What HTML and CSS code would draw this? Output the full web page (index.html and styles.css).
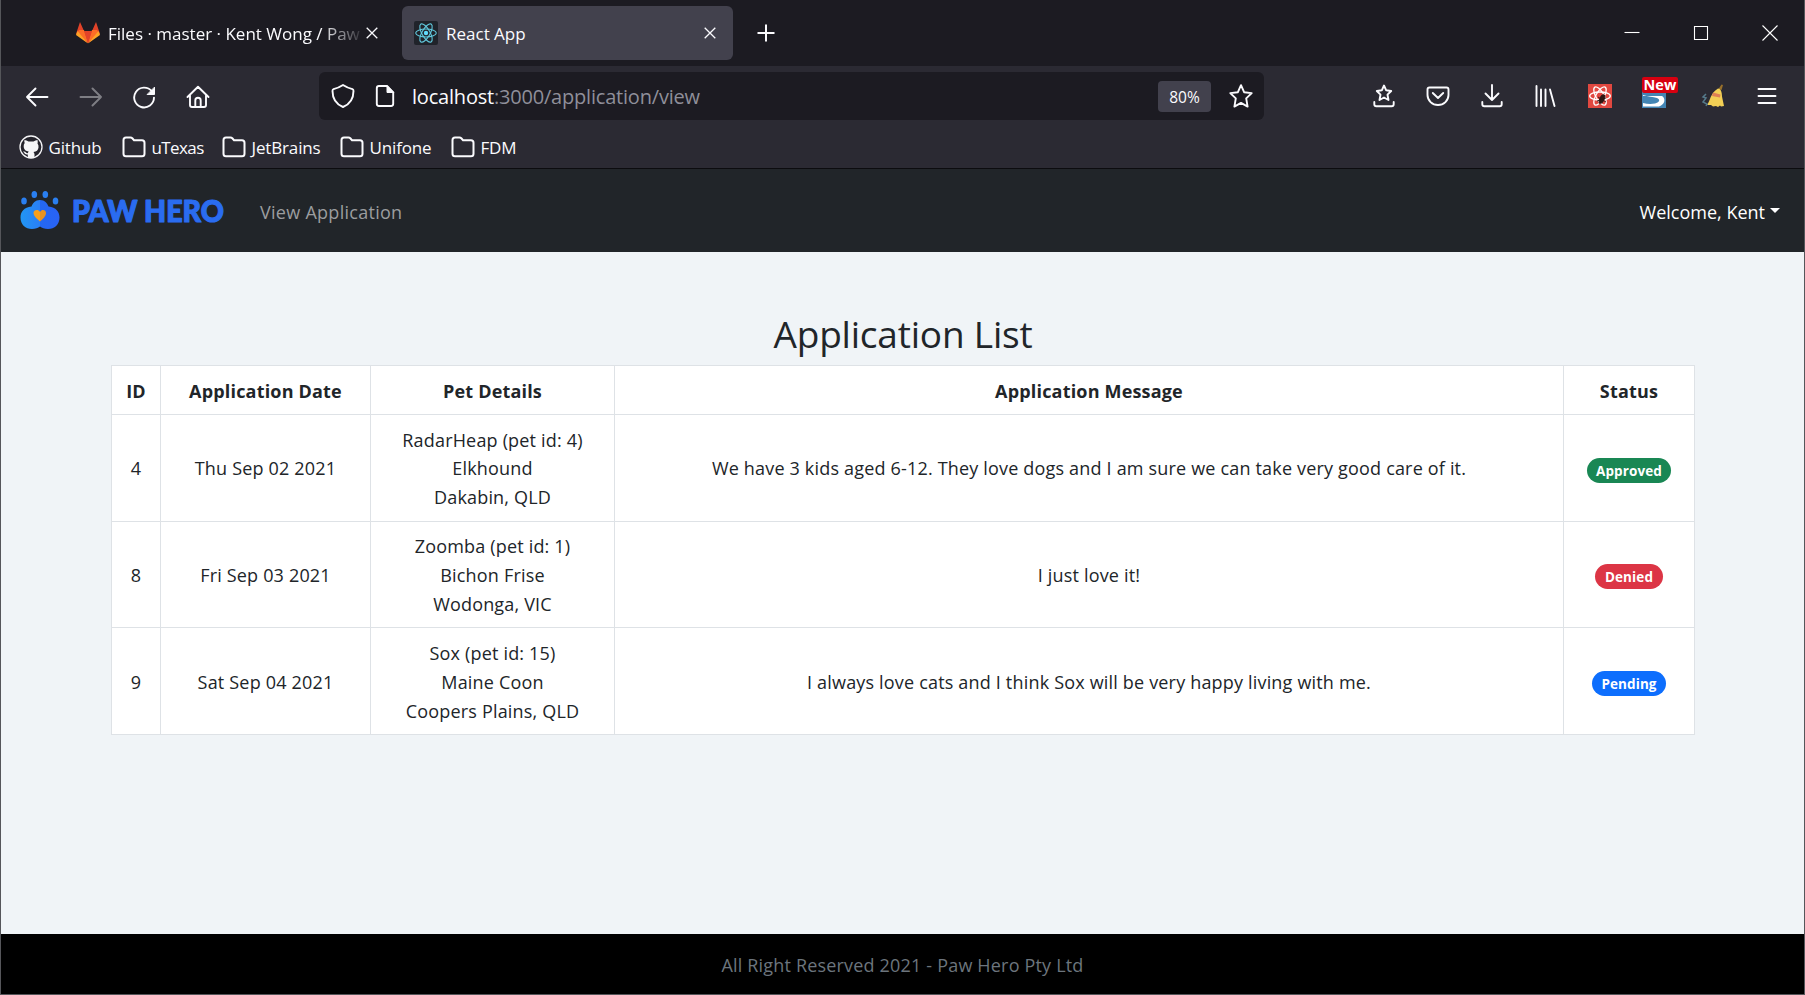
FILE: index.html
```html
<!DOCTYPE html>
<html lang="en">
<head>
<meta charset="utf-8">
<title>React App</title>
<link rel="stylesheet" href="styles.css">
</head>
<body>
<div class="window">
  <div class="tabstrip">
    <div class="tab">
      <svg class="icon" viewBox="0 0 24 24"><path fill="#e24329" d="M12 22 0 13 4 1l4 9h8l4-9 4 12z"/><path fill="#fc6d26" d="M12 22 1 12 3 9h5zM12 22 23 12l-2-3h-5z"/><path fill="#fca326" d="M12 22.500 0 14l1.500-4zM12 22.500 24 14l-1.500-4z"/><path fill="#e24329" d="M8 10h8l-4 12z"/></svg>
      <span class="tab-title faded">Files · master · Kent Wong / Paw</span>
      <svg class="close" viewBox="0 0 12 12"><path d="M.7.7l10.600 10.600M11.300.7.7 11.300"/></svg>
    </div>
    <div class="tab active">
      <svg class="icon" viewBox="0 0 24 24"><rect width="24" height="24" rx="2" fill="#20232a"/><g fill="none" stroke="#61c9de" stroke-width="1.100"><ellipse cx="12" cy="12" rx="10.300" ry="4"/><ellipse cx="12" cy="12" rx="10.300" ry="4" transform="rotate(60 12 12)"/><ellipse cx="12" cy="12" rx="10.300" ry="4" transform="rotate(120 12 12)"/></g><circle cx="12" cy="12" r="2.200" fill="#61dafb"/></svg>
      <span class="tab-title">React App</span>
      <svg class="close" viewBox="0 0 12 12"><path d="M.7.7l10.600 10.600M11.300.7.7 11.300"/></svg>
    </div>
    <svg class="plus" viewBox="0 0 18 18"><path d="M9 .5v17M.5 9h17"/></svg>
    <div class="controls">
      <svg viewBox="0 0 16 16"><path d="M.5 7.500h15"/></svg>
      <svg viewBox="0 0 16 16"><path d="M1.500 1.500h13v13h-13z"/></svg>
      <svg viewBox="0 0 16 16"><path d="M.5.5l15 15M15.500.5l-15 15"/></svg>
    </div>
  </div>

  <div class="toolbar">
    <div class="nav-buttons">
      <svg class="icon line" viewBox="0 0 24 24"><path d="M22.500 12H2M10.500 3.500 2 12l8.500 8.500"/></svg>
      <svg class="icon line dim" viewBox="0 0 24 24"><path d="M1.500 12H22M13.500 3.500 22 12l-8.500 8.500"/></svg>
      <svg class="icon line" viewBox="0 0 24 24"><path d="M19.800 6.300A9.900 9.900 0 1 0 22 12.600"/><path fill="#fbfbfe" stroke-width="1" d="M22.500 2.500v7h-7z"/></svg>
      <svg class="icon line" viewBox="0 0 24 24"><path d="M1.500 12 12 1.800 22.500 12M4 10v10q0 2 2 2h12q2 0 2-2V10M9.300 22v-6.500a2.700 2.700 0 0 1 5.400 0V22"/></svg>
    </div>
    <div class="urlbar">
      <svg class="icon line" viewBox="0 0 24 24"><path d="M12 1C9 3 5 4.500 2.500 5.200Q1.500 5.500 1.500 7C1.500 15 6 20.500 12 23c6-2.500 10.500-8 10.500-16q0-1.500-1-1.800C19 4.500 15 3 12 1z"/></svg>
      <svg class="icon line page" viewBox="0 0 24 24"><path d="M14 2H6Q3.800 2 3.800 4.200v15.600Q3.800 22 6 22h12q2.200 0 2.200-2.200V8.500z"/><path fill="#fbfbfe" stroke-width="1" d="M14 2v6.500h6.500z"/></svg>
      <span class="url"><b>localhost</b>:3000/application/view</span>
      <span class="zoom">80%</span>
      <svg class="icon line" viewBox="0 0 24 24"><path d="m12 1.200 3.100 7 7.600.9-5.500 5.300 1.400 8.200L12 18.900l-6.600 3.700 1.400-8.200L1.300 9.100l7.600-.9z"/></svg>
    </div>
    <div class="actions">
      <svg class="icon line" viewBox="0 0 24 24"><path d="m12 1.500 2.200 4.800 5 .7-3.700 3.700 1 5.300-4.500-2.500L7.500 16l1-5.300L4.800 7l5-.7zM2.300 18v2.300q0 2 2 2h15.400q2 0 2-2V18"/></svg>
      <svg class="icon line" viewBox="0 0 24 24"><path d="M3.500 3.500h17q2 0 2 2V11a10.500 10 0 0 1-21 0V5.500q0-2 2-2zM6.800 9l5.200 5 5.200-5"/></svg>
      <svg class="icon line" viewBox="0 0 24 24"><path d="M12 1v14.500M5.500 9.500l6.500 6.500 6.500-6.500M2.300 18v2.300q0 2 2 2h15.400q2 0 2-2V18"/></svg>
      <svg class="icon line" viewBox="0 0 24 24"><path d="M2.500 2v20M7 5.500V22M11.500 5.500V22M16 5.500 20.500 22"/></svg>
      <svg class="icon" viewBox="0 0 24 24"><path fill="#e14840" d="M0 0h24v24H0z"/><g fill="none" stroke="#fff" stroke-width="1.300"><ellipse cx="12" cy="12" rx="10.300" ry="4"/><ellipse cx="12" cy="12" rx="10.300" ry="4" transform="rotate(60 12 12)"/><ellipse cx="12" cy="12" rx="10.300" ry="4" transform="rotate(120 12 12)"/></g><g stroke="#2b1713" stroke-width=".9"><ellipse cx="14" cy="15" rx="2.200" ry="4.500" fill="#2b1713" transform="rotate(25 14 15)"/><path d="m10 13 8 5M9 17l9-3M11 20l6-9"/></g></svg>
      <span class="badged">
        <svg class="icon" viewBox="0 0 24 24"><path fill="#4385b4" d="M0 0h24v24H0z"/><path fill="#fff" d="M1 11c5 2 10 1.500 14 3 4 2 2 4.500-2 5.500-4 .8-8 .5-12-.5v3.500h16c6-2 7-8 3-10.500H1z"/></svg>
        <span class="new">New</span>
      </span>
      <svg class="icon" viewBox="0 0 24 24"><path fill="#98702b" d="m20.500.5 1.500.5-1.500 5-3-1z"/><path fill="#f2cf55" d="M17 4.500c3 0 4 4 4 8L23 22l-3 .5-1-1-2 1.500-2-1-3 .5-2-1.500-4 0c3-3 3-12 11-16.500z"/><path fill="#dd8055" d="m12 8.500 7.500 2-.5 3-8-1.500z"/><path fill="none" stroke="#55798a" stroke-width="1.500" d="M5 10 2 13l3 1-3 4 4 2-1 2"/></svg>
      <svg class="icon line" viewBox="0 0 24 24"><path d="M3.500 5h17M3.500 12h17M3.500 19h17"/></svg>
    </div>
  </div>

  <div class="bookmarks">
    <span class="bm bm-github"><svg class="icon" viewBox="0 0 24 24"><circle cx="12" cy="12" r="11" fill="#24232b" stroke="#f5f5f7" stroke-width="1.300"/><path fill="#f5f5f7" d="M5.500 5q2 0 4 1.500h5q2-1.500 4-1.500.5 2 0 3.500 1.300 1.500 1 4-.5 4-5 4.500 1 1 1 2.500V23H8.800v-3.500Q6 20 5 17.500l-1-1q2-.5 3 1 .8 1 2 .5 0-.8.700-1.500-4.500-.5-5-4.500-.3-2.500 1-4Q5 6.500 5.500 5z"/></svg>Github</span>
    <span class="bm bm-utexas"><svg class="icon folder" viewBox="0 0 24 24"><path d="M1.500 18.700V5Q1.500 2.500 4 2.500h4.500q1 0 1.800.8l1.700 1.900h8q2.500 0 2.500 2.500v11q0 2.500-2.500 2.500H4q-2.500 0-2.500-2.500z"/></svg>uTexas</span>
    <span class="bm bm-jetbrains"><svg class="icon folder" viewBox="0 0 24 24"><path d="M1.500 18.700V5Q1.500 2.500 4 2.500h4.500q1 0 1.800.8l1.700 1.900h8q2.500 0 2.500 2.500v11q0 2.500-2.500 2.500H4q-2.500 0-2.500-2.500z"/></svg>JetBrains</span>
    <span class="bm bm-unifone"><svg class="icon folder" viewBox="0 0 24 24"><path d="M1.500 18.700V5Q1.500 2.500 4 2.500h4.500q1 0 1.800.8l1.700 1.900h8q2.500 0 2.500 2.500v11q0 2.500-2.500 2.500H4q-2.500 0-2.500-2.500z"/></svg>Unifone</span>
    <span class="bm"><svg class="icon folder" viewBox="0 0 24 24"><path d="M1.500 18.700V5Q1.500 2.500 4 2.500h4.500q1 0 1.800.8l1.700 1.900h8q2.500 0 2.500 2.500v11q0 2.500-2.500 2.500H4q-2.500 0-2.500-2.500z"/></svg>FDM</span>
  </div>

  <nav class="navbar">
    <svg class="paw" viewBox="0 0 40 40">
      <defs><linearGradient id="paw" x1="0" x2="1"><stop offset="0" stop-color="#2196f3"/><stop offset=".5" stop-color="#2a7ff5"/><stop offset=".5" stop-color="#2468f2"/><stop offset="1" stop-color="#2962f5"/></linearGradient></defs>
      <path fill="url(#paw)" d="M20 10c5 0 7 3 8.500 6.500C36 17 39.500 22 39.500 27.500c0 7-5 11.500-11.500 11.500-3.500 0-6-1-8-2.500C18 38 15.500 39 12 39 5.500 39 .5 34.500.5 27.500.5 22 4 17 11.500 16.500 13 13 15 10 20 10z"/>
      <g fill="#2a7ff0"><ellipse cx="4" cy="11" rx="2.800" ry="3.500"/><ellipse cx="14.300" cy="4.500" rx="2.800" ry="3.500"/><ellipse cx="25.300" cy="4.500" rx="2.800" ry="3.500"/><ellipse cx="35.500" cy="11" rx="2.800" ry="3.500"/></g>
      <path fill="#f9a01b" d="M20 31.500c-3-2.500-6.500-5.500-6.500-8.500s4.500-4.500 6.500-1z"/><path fill="#e8921f" d="M20 31.500c3-2.500 6-5.500 6-8.500s-4-4.500-6-1z"/>
    </svg>
    <svg class="brand" viewBox="0 0 189 40"><text x="1" y="30.500" textLength="152" lengthAdjust="spacingAndGlyphs">PAW HERO</text></svg>
    <span class="nav-link">View Application</span>
    <span class="user">Welcome, Kent</span>
    <span class="caret"></span>
  </nav>

  <main class="content">
    <h1 class="title">Application List</h1>
    <table class="list">
      <colgroup><col class="c-id"><col class="c-date"><col class="c-pet"><col class="c-msg"><col class="c-status"></colgroup>
      <thead><tr><th>ID</th><th>Application Date</th><th>Pet Details</th><th>Application Message</th><th>Status</th></tr></thead>
      <tbody>
        <tr><td>4</td><td>Thu Sep 02 2021</td><td>RadarHeap (pet id: 4)<br>Elkhound<br>Dakabin, QLD</td><td>We have 3 kids aged 6-12. They love dogs and I am sure we can take very good care of it.</td><td class="status"><span class="pill approved">Approved</span></td></tr>
        <tr><td>8</td><td>Fri Sep 03 2021</td><td>Zoomba (pet id: 1)<br>Bichon Frise<br>Wodonga, VIC</td><td>I just love it!</td><td class="status"><span class="pill denied">Denied</span></td></tr>
        <tr><td>9</td><td>Sat Sep 04 2021</td><td>Sox (pet id: 15)<br>Maine Coon<br>Coopers Plains, QLD</td><td>I always love cats and I think Sox will be very happy living with me.</td><td class="status"><span class="pill pending">Pending</span></td></tr>
      </tbody>
    </table>
  </main>
  <footer class="footer">All Right Reserved 2021 - Paw Hero Pty Ltd</footer>
</div>
</body>
</html>
```
FILE: styles.css
```css
* { box-sizing: border-box; }
body {
  margin: 0;
  font-family: "Open Sans", "Noto Sans", sans-serif;
  color: #212529;
  overflow: hidden;
}
.window {
  width: 1805px;
  height: 995px;
  display: flex;
  flex-direction: column;
  border: solid #55565a;
  border-width: 0 1px 1px;
}
svg { display: block; flex: none; }
.icon { width: 24px; height: 24px; }
.line {
  fill: none;
  stroke: #fbfbfe;
  stroke-width: 1.900;
  stroke-linecap: round;
  stroke-linejoin: round;
}
.dim { opacity: .4; }

.tabstrip {
  height: 66px;
  flex: none;
  background: #1c1b22;
  display: flex;
  align-items: center;
  color: #fbfbfe;
  font-size: 17px;
  padding-left: 75px;
}
.tab { display: flex; align-items: center; width: 326px; height: 54px; }
.tab.active { background: #42414d; border-radius: 6px; width: 331px; padding: 0 17px 0 12px; }
.tab-title { margin-left: 8px; white-space: nowrap; flex: 1; }
.tab-title.faded {
  flex: none;
  width: 254px;
  mask-image: linear-gradient(to right, #000 212px, transparent 258px);
  margin-right: 4px;
}
.close { width: 12px; height: 12px; stroke: #fbfbfe; stroke-width: 1.300; }
.plus { width: 18px; height: 18px; margin-left: 24px; stroke: #fbfbfe; stroke-width: 2; }
.controls { display: flex; gap: 53px; margin-left: auto; margin-right: 26px; }
.controls svg { width: 16px; height: 16px; fill: none; stroke: #fff; stroke-width: 1.100; }

.toolbar {
  height: 60px;
  flex: none;
  background: #2b2a33;
  display: flex;
  align-items: center;
}
.nav-buttons { display: flex; gap: 29.700px; padding: 2px 0 0 24px; width: 318px; }
.urlbar {
  width: 945px;
  height: 48px;
  background: #1c1b22;
  border-radius: 6px;
  display: flex;
  align-items: center;
  padding: 0 11px 0 12px;
}
.page { margin-left: 18px; }
.url { margin: 1px 0 0 15px; font-size: 20px; color: #8f8f9a; flex: 1; letter-spacing: -.2px; }
.url b { font-weight: 400; color: #fbfbfe; }
.zoom {
  width: 53px;
  height: 31px;
  line-height: 32px;
  text-align: center;
  background: #42414d;
  border-radius: 4px;
  color: #fbfbfe;
  font-size: 15.500px;
  margin-right: 18px;
}
.actions { display: flex; gap: 30.100px; padding-left: 107.500px; }
.badged { position: relative; margin-right: 5px; }
.new {
  position: absolute;
  left: 0;
  top: -7px;
  width: 36px;
  height: 16px;
  border-radius: 2px;
  background: #d70010;
  color: #fff;
  font-size: 14.500px;
  font-weight: 700;
  line-height: 15px;
  text-align: center;
}

.bookmarks {
  height: 43px;
  flex: none;
  background: #2b2a33;
  border-bottom: 1px solid #0c0c0f;
  display: flex;
  align-items: flex-start;
  padding: 9px 0 0 18px;
  color: #fbfbfe;
  font-size: 17px;
  letter-spacing: -.15px;
}
.bm { display: flex; gap: 5.500px; line-height: 25px; }
.folder { fill: none; stroke: #fbfbfe; stroke-width: 2; }
.bm-github { width: 103px; }
.bm-utexas { width: 100px; letter-spacing: -.6px; }
.bm-jetbrains { width: 118px; }
.bm-unifone { width: 111px; }

.navbar {
  height: 83px;
  flex: none;
  background: #212529;
  display: flex;
  align-items: center;
  padding: 0 24px 0 19px;
  font-size: 18px;
  color: #fff;
}
.paw { width: 40px; height: 40px; margin-top: -2px; }
.brand {
  margin-left: 11px;
  width: 189px;
  height: 40px;
  font: 900 30.500px Lato, sans-serif;
  fill: #2a6cf0;
  stroke: #2a6cf0;
  stroke-width: 1.200;
  stroke-linejoin: round;
}
.nav-link { color: #9b9d9f; letter-spacing: .28px; padding-top: 2px; }
.user { margin-left: auto; padding-top: 2px; }
.caret {
  margin-left: 5px;
  border: 5.500px solid transparent;
  border-top-color: #fff;
  border-bottom: 0;
}

.content { flex: 1; background: #f0f4f7; padding: 58px 0 0 110px; }
.title {
  margin: 0;
  width: 1584px;
  text-align: center;
  font-weight: 400;
  font-size: 37px;
  letter-spacing: -.2px;
  line-height: 48px;
  height: 55px;
}
.list {
  width: 1584px;
  table-layout: fixed;
  border-collapse: collapse;
  background: #fff;
  text-align: center;
  font-size: 18px;
  letter-spacing: .18px;
  line-height: 28.800px;
}
.list th, .list td { border: 1px solid #dee2e6; padding: 2px 0 0; vertical-align: middle; }
.list th { height: 49px; }
.list td { height: 106.700px; }
.list td.status { padding-top: 1px; }
.c-id { width: 49px; }
.c-date { width: 210px; }
.c-pet { width: 244px; }
.c-status { width: 131px; }
.pill {
  display: inline-block;
  vertical-align: middle;
  height: 25px;
  line-height: 26px;
  border-radius: 13px;
  padding: 0 9.500px;
  color: #fff;
  font-size: 13.500px;
  font-weight: 700;
  letter-spacing: .1px;
}
.approved { background: #198754; }
.denied { background: #dc3545; }
.pending { background: #0d6efd; }

.footer {
  height: 60px;
  flex: none;
  background: #000;
  color: #6c757d;
  font-size: 18px;
  letter-spacing: .18px;
  line-height: 62px;
  text-align: center;
}
```
